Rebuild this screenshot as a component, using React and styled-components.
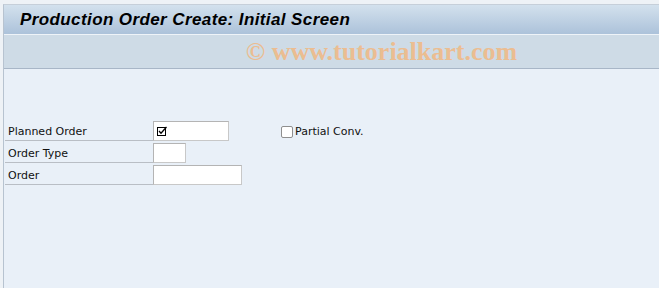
import React from "react";
import styled, { createGlobalStyle } from "styled-components";

const GlobalStyle = createGlobalStyle`
  html, body { margin: 0; padding: 0; }
  body {
    background: #eef2f6;
    font-family: "DejaVu Sans", Tahoma, sans-serif;
    overflow: hidden;
  }
`;

const Screen = styled.div`
  width: 659px;
  height: 288px;
  padding: 4px 0 0 3px;
  box-sizing: border-box;
  background: #eef2f6;
  display: flex;
`;

const Frame = styled.div`
  flex: 1;
  display: flex;
  flex-direction: column;
  border-left: 1px solid #b7c3d0;
  border-top: 1px solid #c6cfd9;
`;

const TitleBar = styled.div`
  height: 29px;
  background: linear-gradient(#d3e1ed, #acc2da);
  border-bottom: 1px solid #eef3f8;
  display: flex;
  align-items: center;
  padding-left: 16px;
`;

const Title = styled.h1`
  margin: 0;
  font-family: "Liberation Sans", Arial, sans-serif;
  font-size: 17px;
  font-weight: bold;
  font-style: italic;
  color: #000;
  letter-spacing: 0.4px;
`;

const Toolbar = styled.div`
  height: 33px;
  background: #cedbe6;
  border-bottom: 1px solid #a8b6c7;
  display: flex;
  align-items: center;
  justify-content: center;
  padding-left: 100px;
`;

const Watermark = styled.span`
  font-family: "Liberation Serif", "Times New Roman", serif;
  font-weight: bold;
  font-size: 26px;
  color: #ebbd91;
`;

const Body = styled.div`
  flex: 1;
  background: #e9f0f8;
  padding: 51px 0 0 1px;
  display: flex;
  flex-direction: column;
`;

const Row = styled.div`
  display: flex;
  align-items: flex-start;
  height: 22px;
`;

const Label = styled.div`
  width: 148px;
  height: 21px;
  box-sizing: border-box;
  border-bottom: 1px solid #b9bec5;
  padding: 5px 0 0 3px;
  font-size: 11px;
  color: #111;
  white-space: nowrap;
`;

const Input = styled.div`
  width: ${(p) => p.$w}px;
  height: 20px;
  box-sizing: border-box;
  margin-top: 1px;
  background: #fff;
  border: 1px solid #b4b4b4;
  border-right-color: #c8c8c8;
  border-bottom-color: #c8c8c8;
  display: flex;
  align-items: center;
  padding-left: 3px;
`;

const CheckGroup = styled.label`
  display: flex;
  align-items: center;
  margin: 5px 0 0 52px;
  font-size: 11px;
  color: #111;
  gap: 2px;
`;

const Box = styled.span`
  width: 12px;
  height: 12px;
  box-sizing: border-box;
  border: 1px solid #8f8f8f;
  border-radius: 2px;
  background: #fff;
`;

const CheckGlyph = () => (
  <svg width="11" height="10" viewBox="0 0 11 10">
    <rect x="0.5" y="1.5" width="8" height="8" fill="none" stroke="#000" strokeWidth="1" />
    <path d="M2 5 L4 7.2 L9.5 1" fill="none" stroke="#000" strokeWidth="1.3" />
  </svg>
);

export default function App() {
  return (
    <>
      <GlobalStyle />
      <Screen>
        <Frame>
          <TitleBar>
            <Title>Production Order Create: Initial Screen</Title>
          </TitleBar>
          <Toolbar>
            <Watermark>© www.tutorialkart.com</Watermark>
          </Toolbar>
          <Body>
            <Row>
              <Label>Planned Order</Label>
              <Input $w={76}>
                <CheckGlyph />
              </Input>
              <CheckGroup>
                <Box />
                Partial Conv.
              </CheckGroup>
            </Row>
            <Row>
              <Label>Order Type</Label>
              <Input $w={33} />
            </Row>
            <Row>
              <Label>Order</Label>
              <Input $w={89} />
            </Row>
          </Body>
        </Frame>
      </Screen>
    </>
  );
}
